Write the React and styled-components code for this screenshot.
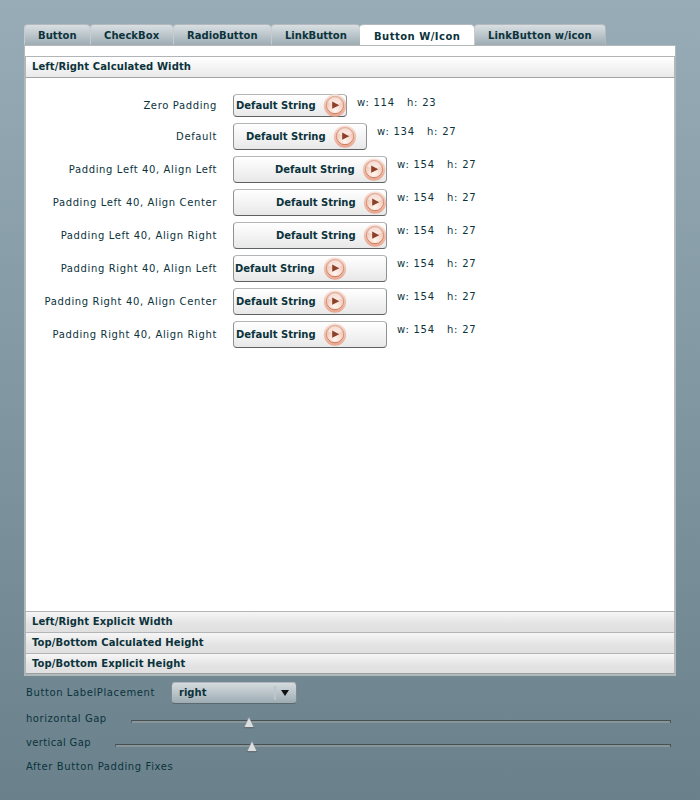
import React from 'react';
import styled, { createGlobalStyle } from 'styled-components';

const Global = createGlobalStyle`
  * { box-sizing: border-box; }
  body { margin: 0; background: #6c838e; }
`;

const Page = styled.div`
  width: 700px;
  height: 800px;
  padding: 24px 24px 0;
  display: flex;
  flex-direction: column;
  background: linear-gradient(#97acb7, #6a818c);
  font: 10px/12px "DejaVu Sans", Verdana, sans-serif;
  letter-spacing: 0.63px;
  color: #0b333c;
  white-space: nowrap;
`;

const TabBar = styled.div`
  display: flex;
  height: 21px;
`;

const Tab = styled.div`
  width: ${(p) => p.$w}px;
  height: ${(p) => (p.$active ? 22 : 21)}px;
  padding: ${(p) => (p.$active ? 6 : 5)}px 0 0 13px;
  border: 1px solid #b3b9bc;
  border-bottom-color: ${(p) => (p.$active ? '#fff' : '#a5adb0')};
  border-left-color: ${(p) => (p.$active ? '#fff' : '#c5cbce')};
  border-right-width: ${(p) => (p.$last ? 1 : 0)}px;
  border-radius: 4px 4px 0 0;
  background: ${(p) => (p.$active ? '#fff' : 'linear-gradient(#d9dfe2, #a0afb6)')};
  font-weight: bold;
  letter-spacing: ${(p) => p.$ls}px;
`;

const Panel = styled.div`
  width: 652px;
  height: 631px;
  display: flex;
  flex-direction: column;
  border: 1px solid #b2b9bb;
  border-width: 1px 1px 2px;
  background: #fff;
  padding-top: 10px;
`;

const Header = styled.div`
  height: ${(p) => (p.$open ? 22 : 21)}px;
  padding: 4px 0 0 6px;
  border: 1px solid #b1b5b7;
  border-bottom: ${(p) => (p.$open ? '1px solid #a0a4a5' : p.$last ? '1px solid #999fa1' : '0')};
  background: ${(p) => (p.$open ? 'linear-gradient(#fff, #e9e9e9)' : 'linear-gradient(#f6f6f6, #e3e3e3 60%, #e0e0e0)')};
  font-weight: bold;
  letter-spacing: 0.11px;
`;

const Content = styled.div`
  height: 533px;
  padding-top: 16px;
  display: flex;
  flex-direction: column;
  gap: 6px;
  border: solid #b9bfc1;
  border-width: 0 1px;
`;

const Row = styled.div`
  display: flex;
  align-items: flex-start;
  height: ${(p) => p.$h}px;
`;

const Label = styled.div`
  width: 191px;
  padding-top: ${(p) => p.$top}px;
  margin-right: 16px;
  text-align: right;
`;

const Button = styled.div`
  width: ${(p) => p.$w}px;
  height: ${(p) => p.$h}px;
  padding-left: ${(p) => p.$pad}px;
  display: flex;
  align-items: center;
  gap: 7px;
  border: 1px solid #b3b5b6;
  border-bottom-color: #5d6163;
  border-left-color: #8e9293;
  border-right-color: #8e9293;
  border-radius: 4px;
  background: linear-gradient(#fff, #e8e8e8);
  font-weight: bold;
  letter-spacing: 0;
`;

const ButtonText = styled.span`
  width: ${(p) => p.$w}px;
`;

const IconSvg = styled.svg`
  flex: none;
  display: block;
`;

const Metric = styled.div`
  width: ${(p) => p.$w}px;
  margin-left: ${(p) => p.$ml}px;
  padding-top: 3px;
  letter-spacing: 0.75px;
`;

const Controls = styled.div`
  padding: 6px 0 0 2px;
  display: flex;
  flex-direction: column;
`;

const ControlRow = styled.div`
  display: flex;
  height: ${(p) => p.$h}px;
`;

const ControlLabel = styled.div`
  width: ${(p) => p.$w}px;
  padding-top: ${(p) => p.$top}px;
  letter-spacing: ${(p) => p.$ls ?? 0.6}px;
`;

const Combo = styled.div`
  width: 126px;
  height: 22px;
  padding: 0 7px 0 7px;
  display: flex;
  align-items: center;
  border: 1px solid #b0b8bb;
  border-bottom-color: #5b686d;
  border-left-color: #7f8b90;
  border-right-color: #7f8b90;
  border-radius: 4px;
  background: linear-gradient(#d5dbde, #9dacb3);
  font-weight: bold;
  letter-spacing: 0;
`;

const ComboValue = styled.span`
  flex: 1;
`;

const ComboRule = styled.span`
  width: 2px;
  height: 14px;
  margin-right: 5px;
  background: #bcc5c9;
`;

const Track = styled.div`
  width: ${(p) => p.$w}px;
  height: 3px;
  margin-top: ${(p) => p.$top}px;
  border-top: 1px solid #474f53;
  border-left: 1px solid #586166;
  border-right: 1px solid #474f53;
  background: #899699;
  position: relative;
`;

const Thumb = styled.svg`
  position: absolute;
  left: ${(p) => p.$x}px;
  top: -5px;
`;

function PlayIcon() {
  return (
    <IconSvg width="24" height="23" viewBox="0 0 24 23">
      <defs>
        <radialGradient id="orb" cx="50%" cy="80%" r="75%">
          <stop offset="0" stopColor="#fff6f0" />
          <stop offset="0.45" stopColor="#f8ddd1" />
          <stop offset="1" stopColor="#eab8a5" />
        </radialGradient>
        <linearGradient id="rim" x1="0" y1="0" x2="0" y2="1">
          <stop offset="0" stopColor="#f9e6de" />
          <stop offset="0.5" stopColor="#f0c1b0" />
          <stop offset="1" stopColor="#e8a790" />
        </linearGradient>
        <linearGradient id="ring" x1="0" y1="0" x2="0" y2="1">
          <stop offset="0" stopColor="#e0b0a0" />
          <stop offset="1" stopColor="#c9785c" />
        </linearGradient>
      </defs>
      <circle cx="12" cy="11.5" r="11.2" fill="url(#rim)" />
      <circle cx="12" cy="11" r="8.7" fill="url(#orb)" stroke="url(#ring)" strokeWidth="1" />
      <path d="M5.2 9 Q6 3.8 12 3.3 Q18 3.8 18.8 9 Q12 11 5.2 9" fill="#fff" opacity="0.5" />
      <path d="M9.2 7.6 L16.2 11.2 L9.2 14.8 Z" fill="#8a4029" />
    </IconSvg>
  );
}

const tabs = [
  ['Button', 66, 0.05], ['CheckBox', 83, 0.05], ['RadioButton', 98, 0.03],
  ['LinkButton', 89, 0], ['Button W/Icon', 114, 0.48], ['LinkButton w/icon', 132, 0.13],
];

const rows = [
  ['Zero Padding', 114, 23, 2],
  ['Default', 134, 27, 12],
  ['Padding Left 40, Align Left', 154, 27, 41],
  ['Padding Left 40, Align Center', 154, 27, 42],
  ['Padding Left 40, Align Right', 154, 27, 42],
  ['Padding Right 40, Align Left', 154, 27, 1],
  ['Padding Right 40, Align Center', 154, 27, 2],
  ['Padding Right 40, Align Right', 154, 27, 2],
];

function Slider({ label, spacing, labelWidth, trackWidth, x }) {
  return (
    <ControlRow $h={24}>
      <ControlLabel $w={labelWidth} $top={3} $ls={spacing}>{label}</ControlLabel>
      <Track $w={trackWidth} $top={10}>
        <Thumb $x={x} width="12" height="13" viewBox="0 0 12 13">
          <path d="M6 1 L11 11.5 H1 Z" fill="#dcdfe0" />
          <path d="M6 1 L1 11.5 H11 Z" fill="none" stroke="#7c878b" strokeWidth="0.6" />
          <path d="M0.8 11.7 H11.2" stroke="#4f595d" strokeWidth="0.8" />
        </Thumb>
      </Track>
    </ControlRow>
  );
}

export default function App() {
  return (
    <Page>
      <Global />
      <TabBar>
        {tabs.map(([name, w, ls], i) => (
          <Tab key={name} $w={w} $ls={ls} $active={i === 4} $last={i === 5}>{name}</Tab>
        ))}
      </TabBar>
      <Panel>
        <Header $open>Left/Right Calculated Width</Header>
        <Content>
          {rows.map(([name, w, h, pad]) => (
            <Row key={name} $h={h}>
              <Label $top={h === 23 ? 6 : 8}>{name}</Label>
              <Button $w={w} $h={h} $pad={pad}>
                <ButtonText $w={pad % 2 ? 81 : 80}>Default String</ButtonText>
                <PlayIcon />
              </Button>
              <Metric $w={40} $ml={10}>w: {w}</Metric>
              <Metric $w={40} $ml={10}>h: {h}</Metric>
            </Row>
          ))}
        </Content>
        <Header>Left/Right Explicit Width</Header>
        <Header>Top/Bottom Calculated Height</Header>
        <Header $last>Top/Bottom Explicit Height</Header>
      </Panel>
      <Controls>
        <ControlRow $h={28}>
          <ControlLabel $w={145} $top={5}>Button LabelPlacement</ControlLabel>
          <Combo>
            <ComboValue>right</ComboValue>
            <ComboRule />
            <svg width="8" height="6" viewBox="0 0 8 6"><path d="M0 0 H8 L4 6 Z" fill="#111" /></svg>
          </Combo>
        </ControlRow>
        <Slider label="horizontal Gap" spacing={0.53} labelWidth={105} trackWidth={540} x={111} />
        <Slider label="vertical Gap" spacing={0.35} labelWidth={89} trackWidth={556} x={130} />
        <ControlRow $h={24}>
          <ControlLabel $w={200} $top={3}>After Button Padding Fixes</ControlLabel>
        </ControlRow>
      </Controls>
    </Page>
  );
}
